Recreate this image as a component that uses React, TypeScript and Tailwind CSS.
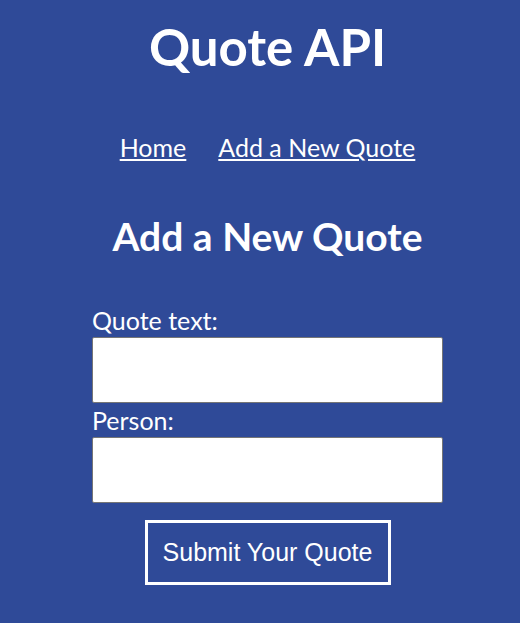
export default function App() {
  return (
    <div className="min-h-[623px] bg-[#2f4a98] pl-[15px] text-white" style={{ fontFamily: "Lato, 'Noto Sans', sans-serif" }}>
      <h1 className="pt-[16px] text-center text-[51px] font-bold leading-[62px]">Quote API</h1>
      <nav className="mt-[54px] flex justify-center gap-[32px] text-[25px] leading-[30px]">
        <a href="#" className="underline">Home</a>
        <a href="#" className="underline">Add a New Quote</a>
      </nav>
      <h2 className="mt-[51px] text-center text-[39px] font-bold leading-[46px]">Add a New Quote</h2>
      <form className="mx-auto mt-[44px] flex w-[351px] flex-col">
        <label className="text-[25px] leading-[34px]">Quote text:</label>
        <input className="h-[66px] rounded-[2px] border border-[#767676] bg-white" />
        <label className="text-[25px] leading-[34px]">Person:</label>
        <input className="h-[66px] rounded-[2px] border border-[#767676] bg-white" />
        <button type="button" className="mx-auto mt-[17px] h-[65px] w-[246px] border-[3px] border-white text-[25px]" style={{ fontFamily: "'Liberation Sans', Arial, sans-serif" }}>Submit Your Quote</button>
      </form>
    </div>
  );
}
